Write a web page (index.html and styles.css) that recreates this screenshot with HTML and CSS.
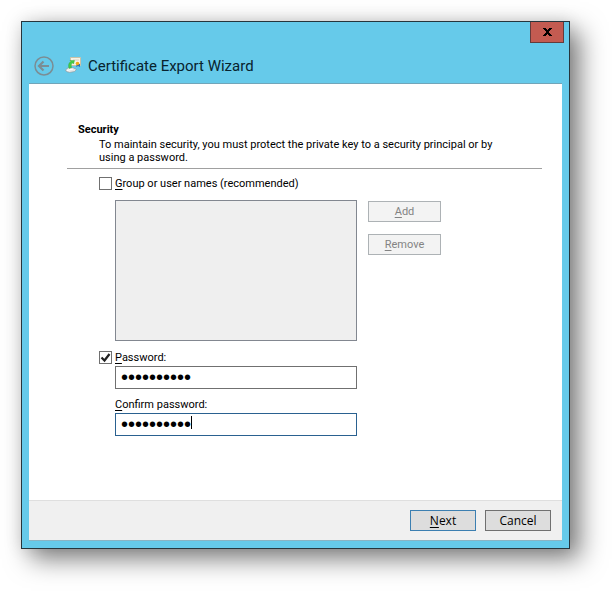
FILE: index.html
```html
<!DOCTYPE html>
<html lang="en">
<head>
    <meta charset="UTF-8">
    <meta name="viewport" content="width=device-width, initial-scale=1.0">
    <title>Certificate Export Wizard</title>
    <link rel="stylesheet" href="styles.css">
</head>
<body>
    <form class="window">
        <div class="caption">
            <button type="button" class="close" aria-label="Close">
                <svg width="9" height="8" viewBox="0 0 9 8"><path d="M0 0h3v1h1v1h1V1h1V0h3v1H8v1H7v1H6v2h1v1h1v1h1v1H6V7H5V6H4v1H3v1H0V7h1V6h1V5h1V3H2V2H1V1H0z"/></svg>
            </button>
        </div>
        <header class="header">
            <button type="button" class="back" aria-label="Back" disabled>
                <svg width="20" height="20" viewBox="0 0 20 20" fill="none" stroke="#7b8d94">
                    <circle cx="10" cy="10" r="9" stroke-width="1.5"/>
                    <path d="M15 10H6M9.5 5.5L5 10l4.500 4.500" stroke-width="2.200"/>
                </svg>
            </button>
            <svg class="logo" width="17" height="16" viewBox="0 0 17 16">
                <path d="M5.500 0.500h10v8h-10z" fill="#f6f3e6" stroke="#c9c2a8"/>
                <path d="M8 3h6" stroke="#d8d4c8"/>
                <path d="M12 7l-1 3 2-1 2 1v-3z" fill="#2d6fb5"/>
                <circle cx="12.500" cy="6.500" r="1.800" fill="#f0a818"/>
                <path d="M0.500 13l3-2.500 5 .5 3 1.500-2 2-5 1-3-1z" fill="#e4e7e8" stroke="#8b9699" stroke-width=".6"/>
                <path d="M2 13.500l6-1.500" stroke="#fff"/>
                <path d="M4 11.500c-1-4 0-6 2-7L5 3.500h4.500L8.500 7 7.500 6C6 7 6 8 6.500 10.500z" fill="#42cf45" stroke="#2a9c3a" stroke-width=".4"/>
            </svg>
            <h1 class="title">Certificate Export Wizard</h1>
        </header>

        <main class="page">
            <section class="intro">
                <h2 class="intro-title">Security</h2>
                <p class="intro-text">To maintain security, you must protect the private key to a security principal or by using a password.</p>
            </section>

            <div class="fields">
                <div class="check-row">
                    <input type="checkbox" class="check" id="use-group">
                    <label for="use-group"><u>G</u>roup or user names (recommended)</label>
                </div>
                <div class="group-row">
                    <select class="group-list" size="8" aria-label="Group or user names" disabled></select>
                    <div class="group-actions">
                        <button type="button" class="btn btn-side" disabled><u>A</u>dd</button>
                        <button type="button" class="btn btn-side" disabled><u>R</u>emove</button>
                    </div>
                </div>

                <div class="check-row">
                    <input type="checkbox" class="check" id="use-password" checked>
                    <label for="use-password"><u>P</u>assword:</label>
                </div>
                <div class="text-field">
                    <input type="password" class="text-input" aria-label="Password" value="0123456789">
                </div>
                <label class="confirm-label" for="confirm"><u>C</u>onfirm password:</label>
                <div class="text-field">
                    <input type="password" class="text-input active" id="confirm" value="0123456789">
                    <span class="caret"></span>
                </div>
            </div>
        </main>

        <footer class="footer">
            <button type="submit" class="btn btn-default"><u>N</u>ext</button>
            <button type="button" class="btn">Cancel</button>
        </footer>
    </form>
</body>
</html>
```

FILE: styles.css
```css
* {
    margin: 0;
    padding: 0;
    box-sizing: border-box;
}

body {
    display: flex;
    min-height: 100vh;
    padding: 21px 42px 42px 21px;
    background: #fff;
    color: #000;
    font-family: Roboto, "Open Sans", sans-serif;
    font-size: 11px;
    line-height: 13px;
}

button,
input,
select {
    font: inherit;
    color: inherit;
    border-radius: 0;
}

u {
    text-underline-offset: 2px;
    text-decoration-skip-ink: none;
}

/* Window frame */
.window {
    flex: 1;
    display: flex;
    flex-direction: column;
    min-width: 0;
    padding: 0 7px 7px;
    background: #66caea;
    border: 1px solid #26353c;
    box-shadow: 10px 10px 24px rgba(0, 0, 0, 0.5), 0 0 16px rgba(0, 0, 0, 0.1);
}

.caption {
    display: flex;
    justify-content: flex-end;
    margin-right: -2px;
}

.close {
    display: flex;
    align-items: center;
    justify-content: center;
    width: 34px;
    height: 21px;
    background: #c35b51;
    border: 1px solid #643b3b;
    border-top: none;
}

.header {
    display: flex;
    align-items: center;
    height: 40px;
    padding: 5px 5px 0;
}

.back {
    display: flex;
    background: none;
    border: none;
}

.logo {
    margin: 0 6px 2px 11px;
}

.title {
    font-size: 15px;
    font-weight: 400;
    line-height: 20px;
    color: #08232e;
}

/* Wizard page */
.page {
    flex: 1;
    padding: 38px 20px 20px 38px;
    background: #fff;
    border-top: 1px solid #71a5b9;
}

.intro {
    padding: 0 40px 4px 11px;
    border-bottom: 1px solid #a0a0a0;
}

.intro-title {
    font-size: 11px;
    font-weight: 700;
    line-height: 16px;
}

.intro-text {
    padding-left: 21px;
}

.fields {
    padding: 8px 0 0 32px;
}

.check-row {
    display: flex;
    align-items: center;
    gap: 3px;
}

.check {
    appearance: none;
    width: 13px;
    height: 13px;
    background: #fff;
    border: 1px solid #707070;
}

.check:checked {
    background: url("data:image/svg+xml,%3Csvg xmlns='http://www.w3.org/2000/svg' viewBox='0 0 11 11'%3E%3Cpath d='M1.500 5.500L4.500 8.500L9.500 2' fill='none' stroke='%23212121' stroke-width='2.200'/%3E%3C/svg%3E") center / 11px no-repeat;
}

.group-row {
    display: flex;
    gap: 11px;
    margin: 10px 0;
    padding-left: 16px;
}

.group-list {
    appearance: none;
    width: 242px;
    height: 141px;
    background: #efefef;
    border: 1px solid #828790;
    opacity: 1;
}

.group-actions {
    display: flex;
    flex-direction: column;
    gap: 12px;
    padding-top: 1px;
}

.text-field {
    position: relative;
    width: 242px;
    margin: 2px 0 9px 16px;
}

.text-input {
    display: block;
    width: 100%;
    height: 23px;
    padding: 0 5px;
    font-family: "Liberation Sans", sans-serif;
    font-size: 20px;
    background: #fff;
    border: 1px solid #707070;
    outline: none;
}

.text-input.active {
    border-color: #2a6190;
}

.caret {
    position: absolute;
    top: 3px;
    left: 76px;
    width: 1px;
    height: 13px;
    background: #000;
}

.confirm-label {
    display: block;
    padding-left: 16px;
}

/* Buttons */
.btn {
    width: 66px;
    height: 21px;
    background: #dddddd;
    border: 1px solid #707070;
    font-family: "Open Sans", sans-serif;
    font-size: 12px;
}

.btn-default {
    border-color: #3c7fb1;
}

.btn-side {
    width: 73px;
    font-family: inherit;
    font-size: 11px;
}

.btn:disabled {
    background: #f3f3f3;
    border-color: #adb2b5;
    color: #838383;
}

.footer {
    display: flex;
    justify-content: flex-end;
    gap: 9px;
    padding: 9px 11px;
    background: #f0f0f0;
    border-top: 1px solid #dfdfdf;
    border-bottom: 1px solid #8ab4c4;
}
```
